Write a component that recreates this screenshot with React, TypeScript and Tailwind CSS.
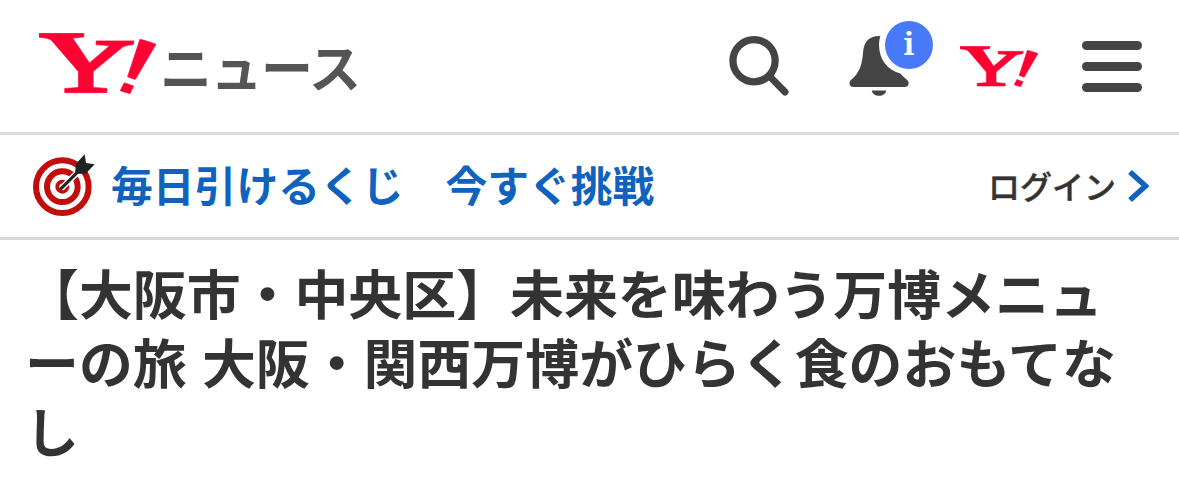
interface IconProps {
  className?: string;
}

function BrandMark({ className }: IconProps) {
  return (
    <svg viewBox="57 38 350 185" preserveAspectRatio="none" fill="#ff0033" stroke="#ff0033" strokeWidth="2" className={className} aria-label="Y!">
      <path d="M57 39H191V50Q174 51 158 54L208 129L268 77Q250 74 228 74V62H341L339 73Q320 74 308 80L219 155V203Q240 205 260 206V219H134V206Q155 205 175 203V155L94 60Q86 53 57 51Z" />
      <path d="M359 57Q384 63 407 72L345 179L322 171Z" />
      <path d="M312 189L340 199L329 222L300 213Z" />
    </svg>
  );
}

function SearchIcon({ className }: IconProps) {
  return (
    <svg viewBox="58 62 180 182" fill="none" stroke="#444" className={className}>
      <circle cx="133" cy="137" r="64" strokeWidth="22" />
      <path d="M181 185L227 232" strokeWidth="21" strokeLinecap="round" />
    </svg>
  );
}

function BellIcon({ className }: IconProps) {
  return (
    <svg viewBox="417 62 180 182" fill="#444" className={className}>
      <path d="M507 62C479 62 462 78 459 108C456 148 449 174 421 196C415 202 416 217 430 217H584C598 217 600 202 593 196C584 188 578 183 572 176C528 163 508 130 507 89C507 78 509 70 511 63Z" />
      <path d="M485 227H529C525 249 489 249 485 227Z" />
    </svg>
  );
}

function TargetIcon({ className }: IconProps) {
  return (
    <svg viewBox="36 84 192 192" fill="none" className={className}>
      <g stroke="#c30d0d">
        <circle cx="127" cy="185" r="79" strokeWidth="18" />
        <circle cx="127" cy="185" r="46" strokeWidth="18" />
        <circle cx="127" cy="185" r="15" strokeWidth="12" />
      </g>
      <path d="M124 190L176 139" stroke="#fff" strokeWidth="18" />
      <path d="M121 193L178 136" stroke="#222" strokeWidth="9" />
      <path d="M165 146L168 116L194 88L198 114L224 118L197 146Z" fill="#222" />
    </svg>
  );
}

const menuBars = [0, 1, 2];

export default function App() {
  return (
    <div className="h-[487px] w-[1179px] overflow-hidden bg-white font-['Noto_Sans_CJK_JP',sans-serif] text-[#333]">
      <header className="flex h-[135px] items-start border-b-[3px] border-[#d9dce0] pr-[37px] pl-[39px]">
        <BrandMark className="mt-[33px] h-[61px] w-[117px] shrink-0" />
        <span className="mt-[41px] ml-[4px] text-[52px] leading-[50px] font-bold tracking-[-1.5px] whitespace-nowrap text-[#555]">ニュース</span>

        <div className="ml-auto flex items-start">
          <SearchIcon className="mt-[36px] h-[60px] w-[60px]" />
          <div className="relative mt-[36px] ml-[60px]">
            <BellIcon className="h-[60px] w-[60px]" />
            <span className="absolute -top-[15px] left-[36px] flex h-[48px] w-[48px] items-center justify-center rounded-full bg-[#4879f8] pb-[2px] font-['Noto_Serif','DejaVu_Serif',serif] text-[30px] leading-none font-bold text-white">
              i
            </span>
          </div>
          <BrandMark className="mt-[46px] ml-[51px] h-[41px] w-[78px]" />
          <div className="mt-[41px] ml-[44px] flex flex-col gap-[12px]">
            {menuBars.map((bar) => (
              <span key={bar} className="h-[9px] w-[60px] rounded-full bg-[#444]" />
            ))}
          </div>
        </div>
      </header>

      <div className="flex h-[105px] items-center border-b-[3px] border-[#d3d8df] pr-[30px] pb-[2px] pl-[32px]">
        <TargetIcon className="h-[64px] w-[64px] shrink-0" />
        <a className="ml-[15px] pb-[3px] text-[41.8px] leading-[60px] font-bold whitespace-nowrap text-[#0f62be]">毎日引けるくじ　今すぐ挑戦</a>
        <a className="ml-auto flex items-center text-[32px] leading-[48px] font-medium whitespace-nowrap [-webkit-text-stroke:0.4px_#333]">
          ログイン
          <svg viewBox="0 0 21 32" fill="none" className="mt-[2px] ml-[12px] h-[32px] w-[21px]">
            <path d="M2 2L17.5 16L2 30" stroke="#0f62be" strokeWidth="5.5" />
          </svg>
        </a>
      </div>

      <h1 className="mt-[17px] pl-[25px] text-[53.9px] leading-[69px] font-bold [word-spacing:3px] whitespace-nowrap">
        【大阪市・中央区】未来を味わう万博メニュ
        <br />
        ーの旅 大阪・関西万博がひらく食のおもてな
        <br />
        し
      </h1>
    </div>
  );
}
